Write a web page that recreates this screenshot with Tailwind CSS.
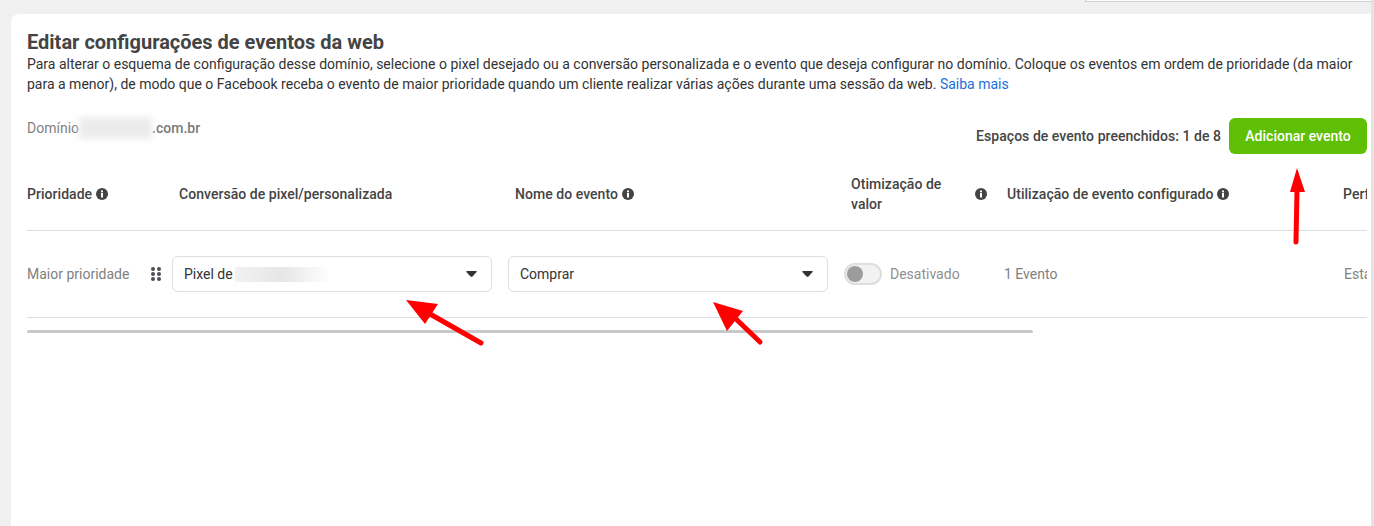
<!DOCTYPE html>
<html>
<head>
	<meta charset="utf-8">
	<title>Editar configurações de eventos da web</title>
	<script src="https://cdn.jsdelivr.net/npm/@tailwindcss/browser@4"></script>
</head>
<body class="bg-[#f0f0f0] font-['Roboto',sans-serif] text-[#444950] text-[14px] leading-[20px] overflow-hidden">
	<div class="relative w-[1374px] h-[526px] overflow-hidden border-r-[3px] border-[#e4e4e4]">
		<div class="h-[14px] flex justify-end">
			<div class="w-[286px] h-[2px] border-b border-l border-[#ccd0d5] bg-white"></div>
		</div>

		<div class="ml-[11px] h-[512px] bg-white rounded-tl-[8px] pl-[16px] pr-[4px] pt-[16px] overflow-hidden">
			<h1 class="text-[20px] leading-[24px] font-bold text-[#444444]">Editar configurações de eventos da web</h1>
			<p class="w-[1330px] text-[#333333]">Para alterar o esquema de configuração desse domínio, selecione o pixel desejado ou a conversão personalizada e o evento que deseja configurar no domínio. Coloque os eventos em ordem de prioridade (da maior para a menor), de modo que o Facebook receba o evento de maior prioridade quando um cliente realizar várias ações durante uma sessão da web. <a href="#" class="text-[#216fdb]">Saiba mais</a></p>

			<div class="flex justify-between mt-[23px] h-[37px]">
				<div class="flex items-start h-[22px] text-[#7f7f7f]">
					<span class="leading-[22px]">Domínio</span>
					<span class="w-[73px] h-[22px] bg-[#ececec] blur-[3px]"></span>
					<span class="font-medium leading-[22px] text-[#7a7a7a]">.com.br</span>
				</div>
				<div class="flex items-center gap-[8px] mt-[1px]">
					<span class="font-medium text-[#444444] tracking-[0.04px]">Espaços de evento preenchidos: 1 de 8</span>
					<button class="w-[138px] h-[36px] rounded-[6px] bg-[#5fbf04] text-white font-medium">Adicionar evento</button>
				</div>
			</div>

			<div class="w-[1340px] border-b border-[#dadde1] h-[77px] pt-[4px] flex items-center font-medium text-[#444444] tracking-[0.04px] overflow-hidden">
				<div class="w-[152px] shrink-0 flex items-center gap-[4px]">Prioridade
					<svg class="w-[12px] h-[12px]" viewBox="0 0 12 12"><circle cx="6" cy="6" r="6" fill="#444444"/><rect x="5" y="5" width="2" height="4.5" fill="#fff"/><rect x="5" y="2.5" width="2" height="1.8" fill="#fff"/></svg>
				</div>
				<div class="w-[336px] shrink-0">Conversão de pixel/personalizada</div>
				<div class="w-[336px] shrink-0 flex items-center gap-[4px]">Nome do evento
					<svg class="w-[12px] h-[12px]" viewBox="0 0 12 12"><circle cx="6" cy="6" r="6" fill="#444444"/><rect x="5" y="5" width="2" height="4.5" fill="#fff"/><rect x="5" y="2.5" width="2" height="1.8" fill="#fff"/></svg>
				</div>
				<div class="w-[156px] shrink-0 flex items-center">
					<span class="w-[110px]">Otimização de valor</span>
					<svg class="w-[12px] h-[12px] ml-[14px]" viewBox="0 0 12 12"><circle cx="6" cy="6" r="6" fill="#444444"/><rect x="5" y="5" width="2" height="4.5" fill="#fff"/><rect x="5" y="2.5" width="2" height="1.8" fill="#fff"/></svg>
				</div>
				<div class="w-[336px] shrink-0 flex items-center gap-[4px]">Utilização de evento configurado
					<svg class="w-[12px] h-[12px]" viewBox="0 0 12 12"><circle cx="6" cy="6" r="6" fill="#444444"/><rect x="5" y="5" width="2" height="4.5" fill="#fff"/><rect x="5" y="2.5" width="2" height="1.8" fill="#fff"/></svg>
				</div>
				<div class="shrink-0">Performance</div>
			</div>

			<div class="w-[1340px] border-b border-[#dadde1] h-[87px] flex items-center overflow-hidden">
				<div class="w-[124px] shrink-0 text-[#7f7f7f]">Maior prioridade</div>
				<svg class="w-[10px] h-[14px] shrink-0" viewBox="0 0 10 14" fill="#4b4f56">
					<circle cx="2" cy="2" r="2"/><circle cx="8" cy="2" r="2"/><circle cx="2" cy="7" r="2"/><circle cx="8" cy="7" r="2"/><circle cx="2" cy="12" r="2"/><circle cx="8" cy="12" r="2"/>
				</svg>
				<div class="ml-[11px] w-[320px] h-[36px] shrink-0 border border-[#dadde1] rounded-[6px] flex items-center justify-between pl-[11px] pr-[14px] text-[#333333]">
					<div class="flex items-center">
						<span>Pixel de</span>
						<span class="w-[95px] h-[15px] ml-[2px] bg-gradient-to-r from-[#f2f2f2] via-[#e6e6e6] to-white"></span>
					</div>
					<svg class="w-[11px] h-[6px]" viewBox="0 0 11 6"><path d="M1 0H10Q11.4 0 10.6 1L6.5 5.4Q5.5 6.2 4.5 5.4L0.4 1Q-0.4 0 1 0Z" fill="#333333"/></svg>
				</div>
				<div class="ml-[16px] w-[320px] h-[36px] shrink-0 border border-[#dadde1] rounded-[6px] flex items-center justify-between pl-[11px] pr-[14px] text-[#333333]">
					<span>Comprar</span>
					<svg class="w-[11px] h-[6px]" viewBox="0 0 11 6"><path d="M1 0H10Q11.4 0 10.6 1L6.5 5.4Q5.5 6.2 4.5 5.4L0.4 1Q-0.4 0 1 0Z" fill="#333333"/></svg>
				</div>
				<div class="ml-[16px] w-[38px] h-[22px] shrink-0 rounded-full border-2 border-[#dedede] bg-[#f2f2f2] flex items-center pl-[1px]">
					<span class="w-[16px] h-[16px] rounded-full bg-[#9c9c9c]"></span>
				</div>
				<div class="ml-[8px] w-[114px] shrink-0 text-[#8f8f8f]">Desativado</div>
				<div class="w-[340px] shrink-0 text-[#7f7f7f]">1 Evento</div>
				<div class="shrink-0 text-[#7f7f7f]">Estado</div>
			</div>

			<div class="w-[1006px] h-[3px] mt-[12px] bg-[#c8c8c8] rounded-full"></div>
		</div>

		<!-- setas vermelhas por cima da tela -->
		<svg class="absolute left-0 top-0 pointer-events-none" width="1374" height="526" viewBox="0 0 1374 526">
			<g stroke="#ff0000" stroke-width="5" stroke-linecap="round" fill="none">
				<path d="M481 343L430 314"/>
				<path d="M760 342L735 318"/>
				<path d="M1296 242L1297 190"/>
			</g>
			<g fill="#ff0000">
				<path d="M406 300L438 304L425 324Z"/>
				<path d="M713 302L743 311L727 331Z"/>
				<path d="M1297 168L1290 192H1305Z"/>
			</g>
		</svg>
	</div>
</body>
</html>
